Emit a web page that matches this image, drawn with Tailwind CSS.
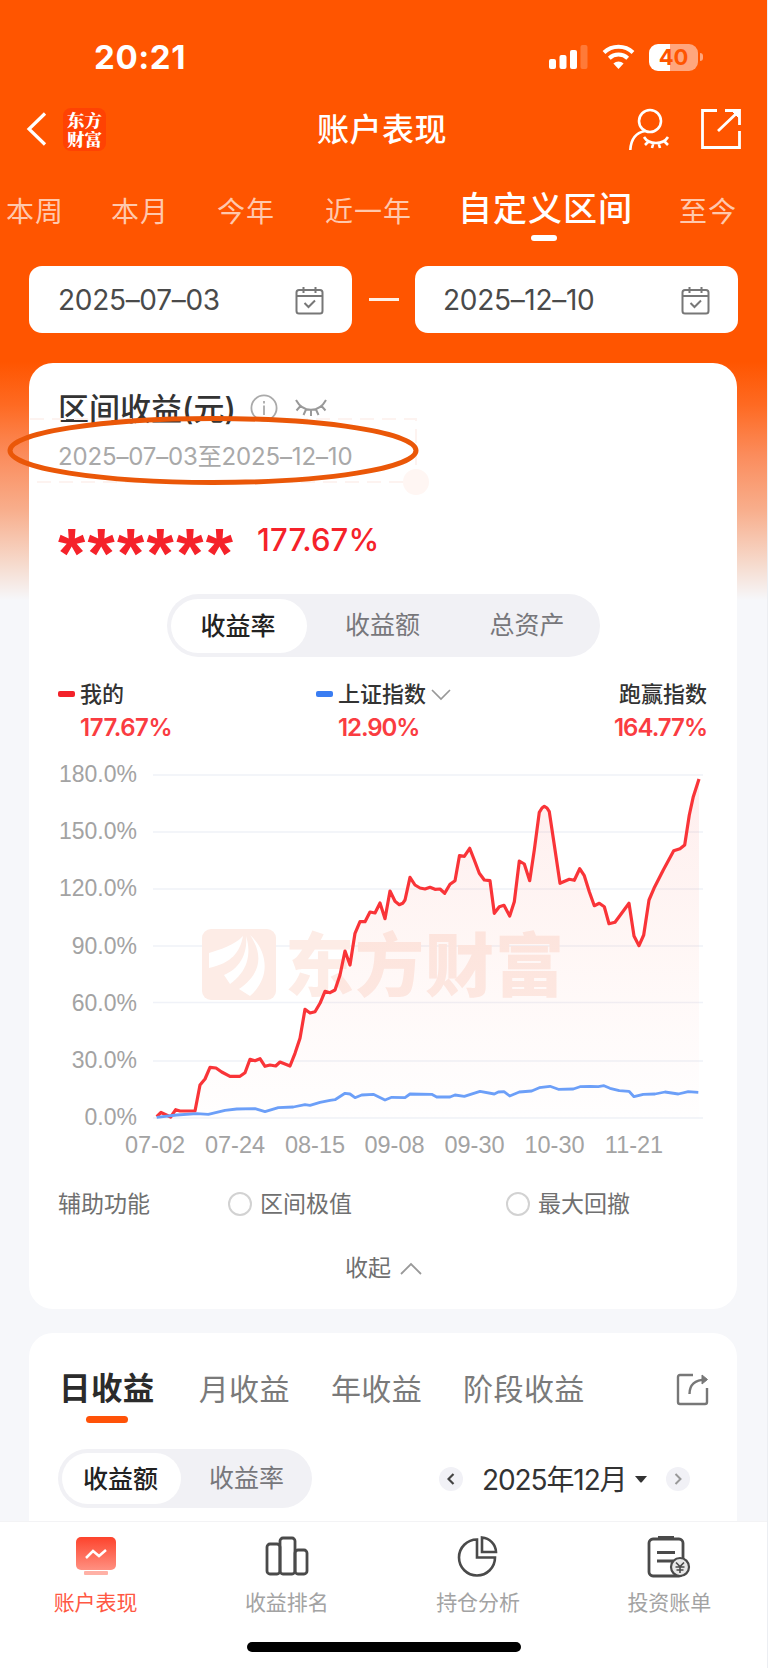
<!DOCTYPE html>
<html lang="zh-CN">
<head>
    <meta charset="UTF-8">
    <meta name="viewport" content="width=device-width, initial-scale=1.0">
    <title>账户表现</title>
    <script src="https://cdn.jsdelivr.net/npm/@tailwindcss/browser@4"></script>
</head>
<body class="bg-[#f6f7fa] font-['Inter','Noto_Sans_CJK_SC',sans-serif] text-[#333]">
    <div class="relative flex flex-col w-[768px] h-[1668px] overflow-hidden border-r border-[#eceef2] bg-[linear-gradient(180deg,#ff5500_0px,#ff5500_362px,#fe6a22_405px,#fb8c5c_455px,#f8ae8c_510px,#f6dbce_565px,#f6f7fa_600px)]">

        <!-- Status bar -->
        <div class="flex items-center h-[88px] pt-[26px] pl-[94px] pr-[64px] text-white">
            <span class="text-[33px] font-bold leading-none tracking-[0.600px]">20:21</span>
            <svg class="ml-auto" width="39" height="26" viewBox="0 0 39 26" fill="#fff">
                <rect x="0" y="15" width="7" height="10" rx="2"/>
                <rect x="10.500" y="11" width="7" height="14" rx="2"/>
                <rect x="21" y="6" width="7" height="19" rx="2"/>
                <rect x="31.500" y="1" width="7" height="24" rx="2" opacity=".22"/>
            </svg>
            <svg class="ml-[14px]" width="33" height="26" viewBox="0 0 33 26" fill="none" stroke="#fff" stroke-width="4">
                <path d="M2 8.500C10 .8 23 .8 31 8.500"/>
                <path d="M7.300 14.200C12.500 9.300 20.500 9.300 25.700 14.200"/>
                <path d="M16.500 25L11.400 19.600C14.300 16.900 18.700 16.900 21.600 19.600Z" fill="#fff" stroke="none"/>
            </svg>
            <div class="flex items-center ml-[14px]">
                <div class="w-[49px] h-[27px] rounded-[9px] bg-[linear-gradient(90deg,#fff_42%,#ffa67d_42%)] text-[#ff5500] text-[22px] font-bold leading-[27px] text-center">40</div>
                <div class="w-[3px] h-[8px] ml-[2px] rounded-r-full bg-[#ffa67d]"></div>
            </div>
        </div>

        <!-- Title bar -->
        <div class="flex items-center h-[82px] pl-[26px] pr-[25px] text-white">
            <svg width="21" height="34" viewBox="0 0 21 34" fill="none" stroke="#fff" stroke-width="3.200"><path d="M19 1.500L3 17L19 32.500"/></svg>
            <div class="flex flex-col items-center justify-center w-[43px] h-[43px] ml-[16px] rounded-lg bg-[#ff4203] font-['Noto_Serif_CJK_SC','Noto_Sans_CJK_SC',serif] font-black text-[17.500px] leading-[19.500px]"><span>东方</span><span>财富</span></div>
            <h1 class="ml-[211px] pt-[2px] text-[32px] font-medium tracking-[0.500px] leading-none">账户表现</h1>
            <svg class="ml-auto" width="42" height="43" viewBox="0 0 42 43" fill="none" stroke="#fff" stroke-width="2.600">
                <circle cx="22" cy="13" r="11"/>
                <path d="M2.300 42C3 30 9 24.500 17 23"/>
                <path d="M16 29C21 37 35 37 40 29M17 37L21 33M24 40L25.500 35M32 40L30.500 35M40 37L36 33"/>
            </svg>
            <svg class="ml-[30px]" width="42" height="42" viewBox="0 0 42 42" fill="none" stroke="#fff" stroke-width="2.800">
                <path d="M17 2.500H2.500V39.500H39.500V23M18 23L39 3M25 2.500H39.500V17"/><path d="M32 3H39V10Z" fill="#fff" stroke-width="1"/>
            </svg>
        </div>

        <!-- Period tabs -->
        <div class="flex items-center h-[82px] pt-[2px] pl-[6px] text-[28px] leading-[40px] tracking-[1px] text-[#ffc8ad] whitespace-nowrap">
            <span>本周</span>
            <span class="ml-[47px]">本月</span>
            <span class="ml-[48px]">今年</span>
            <span class="ml-[50px]">近一年</span>
            <span class="relative -top-[3px] ml-[46px] text-[34px] font-medium text-white">自定义区间<i class="absolute left-[73px] top-[46px] w-[26px] h-[6px] rounded-full bg-white"></i></span>
            <span class="ml-[46px]">至今</span>
        </div>

        <!-- Date range -->
        <div class="flex items-center mt-[14px] pl-[29px] h-[67px] text-[28px] tracking-[-0.300px] text-[#4a4a4a]">
            <div class="flex items-center w-[323px] h-[67px] pt-px pl-[29px] pr-[28px] rounded-[13px] bg-white">
                <span>2025–07–03</span>
                <svg class="ml-auto" width="29" height="29" viewBox="0 0 29 29" fill="none" stroke="#777" stroke-width="2">
                    <rect x="1.500" y="4" width="26" height="23.500" rx="2.500"/><path d="M1.500 10H27.500M8.500 1V7M20.500 1V7M9.500 17L13.500 21L20 14.500"/>
                </svg>
            </div>
            <div class="w-[30px] h-[3px] mx-[16.500px] bg-[#fff0e6]"></div>
            <div class="flex items-center w-[323px] h-[67px] pt-px pl-[28px] pr-[28px] rounded-[13px] bg-white">
                <span>2025–12–10</span>
                <svg class="ml-auto" width="29" height="29" viewBox="0 0 29 29" fill="none" stroke="#777" stroke-width="2">
                    <rect x="1.500" y="4" width="26" height="23.500" rx="2.500"/><path d="M1.500 10H27.500M8.500 1V7M20.500 1V7M9.500 17L13.500 21L20 14.500"/>
                </svg>
            </div>
        </div>

        <!-- Profit card -->
        <div class="relative shrink-0 w-[708px] h-[946px] mt-[30px] ml-[29px] rounded-[24px] bg-white">
            <div class="flex items-center h-[40px] mt-[25px] pl-[29px]">
                <h2 class="pt-px text-[31px] font-medium leading-none whitespace-nowrap">区间收益(元)</h2>
                <svg class="ml-[14px]" width="28" height="28" viewBox="0 0 28 28" fill="none" stroke="#aaa" stroke-width="1.800"><circle cx="14" cy="14" r="12.600"/><path d="M14 11.500V21M14 7V9.500"/></svg>
                <svg class="ml-[16px]" width="34" height="22" viewBox="0 0 34 22" fill="none" stroke="#999" stroke-width="2"><path d="M2 3C9 16 25 16 32 3M6.500 9L2.500 13.500M12 12.500L9.500 18M17 13V19M22 12.500L24.500 18M27.500 9L31.500 13.500"/></svg>
            </div>
            <div class="h-[30px] mt-[14px] pl-[29px] text-[24px] leading-[30px] tracking-[-0.150px] text-[#a9a9a9]">2025–07–03至2025–12–10</div>
            <div class="flex items-center h-[40px] mt-[46px] pl-[29px] text-[#f5222a]">
                <span class="w-[199px] h-[40px] font-['Liberation_Sans'] text-[70px] font-bold leading-[72px] tracking-[2.300px]">******</span>
                <span class="pt-[2px] text-[31px] font-medium leading-none tracking-[0.100px]">177.67%</span>
            </div>

            <div class="flex items-center w-[433px] h-[63px] mt-[36px] ml-[138px] px-[4px] rounded-full bg-[#f1f1f5] text-[25px] text-center text-[#77777b]">
                <span class="w-[136px] h-[54px] pr-[2px] rounded-full bg-white font-medium leading-[54px] text-[#222]">收益率</span>
                <span class="w-[151px]">收益额</span>
                <span class="flex-1">总资产</span>
            </div>

            <div class="flex mt-[20px] pl-[29px] pr-[30px] text-[22px] font-medium leading-[34px]">
                <div class="flex w-[258px]">
                    <i class="w-[17px] h-[6px] mt-[14px] mr-[5px] rounded-[2px] bg-[#f3222a]"></i>
                    <div>我的<div class="text-[24px] font-semibold leading-[34px] tracking-[-0.500px] text-[#fa3c41]">177.67%</div></div>
                </div>
                <div class="flex">
                    <i class="w-[17px] h-[6px] mt-[14px] mr-[5px] rounded-[2px] bg-[#3a7df2]"></i>
                    <div>
                        <span class="flex items-center">上证指数<svg class="ml-[5px]" width="20" height="13" viewBox="0 0 20 13" fill="none" stroke="#999" stroke-width="1.700"><path d="M1 2L10 11L19 2"/></svg></span>
                        <div class="text-[24px] font-semibold leading-[34px] tracking-[-1.100px] text-[#fa3c41]">12.90%</div>
                    </div>
                </div>
                <div class="ml-auto text-right">跑赢指数<div class="text-[24px] font-semibold leading-[34px] tracking-[-1px] text-[#fa3c41]">164.77%</div></div>
            </div>

            <!-- Return chart -->
            <svg class="absolute left-[29px] top-[392px]" width="652" height="405" viewBox="58 755 652 405">
                <defs>
                    <linearGradient id="area" x1="0" y1="775" x2="0" y2="1118" gradientUnits="userSpaceOnUse">
                        <stop offset="0" stop-color="#fa3c3c" stop-opacity=".09"/>
                        <stop offset=".5" stop-color="#fa5a3c" stop-opacity=".05"/>
                        <stop offset="1" stop-color="#fa5a5a" stop-opacity="0.005"/>
                    </linearGradient>
                </defs>
                <g stroke="#f0f2f8" stroke-width="1.500">
                    <path d="M153 775H703M153 832H703M153 889H703M153 946H703M153 1002.500H703M153 1061H703M153 1118H703"/>
                </g>
                <g fill="#fdece6">
                    <rect x="202" y="929" width="74" height="71" rx="9"/>
                    <text x="285" y="991" font-family="Noto Sans CJK SC" font-weight="900" font-size="69" letter-spacing="1">东方财富</text>
                </g>
                <g fill="#fff">
                    <path d="M209 953C219 950 235 945 243 936C240 952 232 963 209 968Z"/>
                    <path d="M246 936C248 954 239 969 224 975L230 984C247 972 252 955 246 936Z"/>
                    <path d="M250 935C265 957 259 975 239 989L250 996C272 977 267 950 250 935Z"/>
                </g>
                <path id="mineArea" fill="url(#area)"/>
                <polyline id="mine" fill="none" stroke="#f93438" stroke-width="3.200" stroke-linejoin="round"/>
                <polyline id="index" fill="none" stroke="#6c9ff8" stroke-width="2.800" stroke-linejoin="round"/>
                <g font-family="Liberation Sans" font-size="23" fill="#a3a3a3" text-anchor="end">
                    <text x="137" y="782">180.0%</text>
                    <text x="137" y="839">150.0%</text>
                    <text x="137" y="896">120.0%</text>
                    <text x="137" y="954">90.0%</text>
                    <text x="137" y="1011">60.0%</text>
                    <text x="137" y="1068">30.0%</text>
                    <text x="137" y="1125">0.0%</text>
                </g>
                <g font-family="Liberation Sans" font-size="23.500" fill="#a3a3a3" text-anchor="middle">
                    <text x="155" y="1153">07-02</text>
                    <text x="235" y="1153">07-24</text>
                    <text x="315" y="1153">08-15</text>
                    <text x="394.500" y="1153">09-08</text>
                    <text x="474.500" y="1153">09-30</text>
                    <text x="554.500" y="1153">10-30</text>
                    <text x="634" y="1153">11-21</text>
                </g>
            </svg>

            <div class="flex items-center h-[34px] mt-[442px] pl-[29px] text-[23px] text-[#707070]">
                <span class="w-[170px]">辅助功能</span>
                <i class="w-[24px] h-[24px] mr-[8px] rounded-full border-2 border-[#d2d2d2]"></i>
                <span class="w-[246px]">区间极值</span>
                <i class="w-[24px] h-[24px] mr-[8px] rounded-full border-2 border-[#d2d2d2]"></i>
                <span>最大回撤</span>
            </div>
            <div class="flex items-center h-[34px] mt-[30px] pl-[316px] text-[23px] text-[#707070]">
                收起<svg class="ml-[9px]" width="22" height="13" viewBox="0 0 22 13" fill="none" stroke="#999" stroke-width="1.800"><path d="M1 12L11 2L21 12"/></svg>
            </div>

            <!-- Marker drawn over the date line -->
            <svg class="absolute -left-[29px] top-[37px]" width="440" height="100" viewBox="0 400 440 100" fill="none">
                <path d="M30 419H416V482H30" stroke="#fdf3f0" stroke-width="2" stroke-dasharray="14 8"/>
                <circle cx="416" cy="482" r="13" fill="#fff6f3"/>
                <ellipse cx="213" cy="450.500" rx="203" ry="32" stroke="#ea5708" stroke-width="5"/>
            </svg>
        </div>

        <!-- Calendar card -->
        <div class="shrink-0 w-[708px] h-[188px] mt-[24px] ml-[29px] rounded-t-[24px] bg-white">
            <div class="flex items-center h-[44px] mt-[34px] pl-[30px] pr-[28px] text-[30px] tracking-[0.400px] text-[#7a7a7a] whitespace-nowrap">
                <span class="relative text-[31.500px] font-bold text-[#2b2b2b]">日收益<i class="absolute left-[27px] bottom-[-10px] w-[42px] h-[7px] rounded-full bg-[#ff5208]"></i></span>
                <span class="ml-[44px]">月收益</span>
                <span class="ml-[41px]">年收益</span>
                <span class="ml-[41px]">阶段收益</span>
                <svg class="ml-auto" width="33" height="33" viewBox="0 0 33 33" fill="none" stroke="#777" stroke-width="2.400">
                    <path d="M17 2H4Q2 2 2 4V29Q2 31 4 31H29Q31 31 31 29V15"/><path d="M13.500 21C13.500 12 18 7 30 6.500"/><path d="M26 2L31.500 6.500L26 11Z" fill="#777" stroke-width="1"/>
                </svg>
            </div>
            <div class="flex items-center mt-[38px] pl-[29px]">
                <div class="flex items-center w-[254px] h-[59px] px-[4px] rounded-full bg-[#f1f1f5] text-[25px] text-center text-[#77777b]">
                    <span class="w-[119px] h-[51px] pr-[2px] rounded-full bg-white font-medium leading-[52px] text-[#222]">收益额</span>
                    <span class="flex-1 pl-[4px]">收益率</span>
                </div>
                <div class="flex items-center ml-[127px]">
                    <div class="flex items-center justify-center w-[24px] h-[24px] rounded-full bg-[#f1f1f6]"><svg width="8" height="12" viewBox="0 0 8 12" fill="none" stroke="#444" stroke-width="2.200"><path d="M6.500 1L1.500 6L6.500 11"/></svg></div>
                    <span class="pt-[2px] ml-[19px] text-[28px] leading-none tracking-[-1.100px] text-[#333] whitespace-nowrap">2025年12月</span>
                    <svg class="ml-[8px]" width="12" height="8" viewBox="0 0 12 8" fill="#333"><path d="M0 1H12L7 7Q6 8 5 7Z"/></svg>
                    <div class="flex items-center justify-center w-[24px] h-[24px] ml-[19px] rounded-full bg-[#f1f1f6]"><svg width="8" height="12" viewBox="0 0 8 12" fill="none" stroke="#999" stroke-width="2"><path d="M1.500 1L6.500 6L1.500 11"/></svg></div>
                </div>
            </div>
        </div>

        <!-- Bottom navigation -->
        <div class="relative shrink-0 h-[147px] border-t border-[#f3f3f5] bg-white">
            <div class="grid grid-cols-4 w-[767px] pt-[14px] pr-[2px] text-[21px] leading-[30px] text-center text-[#a3a3a3]">
                <div class="flex flex-col items-center text-[#ff5843]">
                    <svg width="44" height="44" viewBox="0 0 44 44">
                        <defs><linearGradient id="tv" x1="0" y1="0" x2="0" y2="1"><stop offset="0" stop-color="#fd432c"/><stop offset="1" stop-color="#ff9081"/></linearGradient></defs>
                        <rect x="2" y="1" width="40" height="33" rx="5" fill="url(#tv)"/><rect x="10" y="35" width="24" height="4" rx="1" fill="#ffb1a6"/>
                        <path d="M12 22L19 15L25 20L32 14" fill="none" stroke="#fff" stroke-width="2.500"/>
                    </svg>
                    <span class="mt-[8px]">账户表现</span>
                </div>
                <div class="flex flex-col items-center">
                    <svg width="44" height="44" viewBox="0 0 44 44" fill="none" stroke="#4a4a4a" stroke-width="2.800"><rect x="2" y="8" width="13" height="30" rx="3"/><rect x="15" y="2" width="15" height="36" rx="3"/><rect x="30" y="14" width="12" height="24" rx="3"/></svg>
                    <span class="mt-[8px]">收益排名</span>
                </div>
                <div class="flex flex-col items-center">
                    <svg width="44" height="44" viewBox="0 0 44 44" fill="none" stroke="#4a4a4a" stroke-width="2.600"><path d="M21 3.500A18 18 0 1 0 39 21.500H21Z"/><path d="M26 1.500V16H40A15 15 0 0 0 26 1.500Z"/></svg>
                    <span class="mt-[8px]">持仓分析</span>
                </div>
                <div class="flex flex-col items-center">
                    <svg width="44" height="44" viewBox="0 0 44 44" fill="none" stroke="#4a4a4a" stroke-width="2.800"><rect x="2" y="3" width="34" height="37" rx="4"/><path d="M11 2H27" stroke-width="4"/><path d="M10 16.500H28M10 25H26"/><circle cx="33" cy="31" r="9" fill="#e8e8e8" stroke-width="2.200"/><path d="M29 26.500L33 30.500L37 26.500M28.500 31H37.500M29.500 34H36.500M33 30.500V37" stroke-width="1.600"/></svg>
                    <span class="mt-[8px]">投资账单</span>
                </div>
            </div>
            <div class="w-[274px] h-[10px] mt-[24px] ml-[247px] rounded-full bg-black"></div>
        </div>
    </div>

    <script>
        const mine = [
            [156.7,1116.7],[161,1112.5],[170.7,1117],[175.7,1109.7],[180,1111],[195,1111],[200,1085],[205,1079],[210,1067.3],[216,1068],
            [221.7,1072],[230,1076.3],[240,1076.3],[245,1072.7],[250,1059.3],[255,1060.7],[260,1058.7],[265,1066.3],[270,1065],[275.7,1066],
            [280,1062],[290,1066],[295,1053.3],[300,1038.3],[305,1009.3],[310,1013],[315,1011.7],[320,1003.3],[325,991.3],[330,992.7],
            [335,990],[340,975],[345,951],[350,965],[355,933.3],[360,921.7],[365,921.7],[370,912],[375,913],[380,903],[385,918.7],
            [390,891],[395,901.3],[399.3,904.7],[402.7,903.3],[405,900],[410,877.3],[415,885],[420,888],[425,889],[430,887.3],[435,889.3],
            [440,889],[444.7,893.3],[450,884.3],[455,880.7],[459.5,855.5],[464.3,856.3],[469.7,848.3],[474.3,860],[479.3,873.3],[484.3,880],
            [490,880.7],[494.3,913.3],[499.3,906.7],[504,905.3],[509.7,916],[514.3,901.7],[519.3,861],[524.3,864],[529.7,880.7],[534.3,850],
            [539.3,812.3],[542,808],[544.3,806.3],[547,808],[549.3,811.7],[554.3,845],[560,883.3],[569.3,879.3],[574.3,880.3],[579.7,868.7],[584.3,875.7],
            [589.3,891.7],[594.3,905.7],[599.3,903.3],[604.3,906.7],[609,923.7],[615,922.3],[629,903.3],[634,936],[639,945.7],[643.7,935],
            [649,900],[654,888.3],[663.3,870],[673.7,850.7],[680,848.7],[684.7,845],[689.3,815],[693.3,796.7],[699,779]
        ];
        const index = [
            [156.7,1117.3],[176.7,1115],[196.7,1113.7],[208.3,1114.3],[225,1110.3],[236.7,1109],[255,1108.7],[265,1111.7],[278.3,1107.7],
            [293.3,1107],[305,1104.7],[310,1105.3],[320,1102.3],[330,1100.3],[335,1099.7],[345,1093.3],[350,1094],[355,1097.7],[361.7,1095],
            [373.3,1094.3],[385,1100],[391.7,1097.3],[405,1097.7],[410,1094],[431.7,1094.3],[436.7,1097],[450,1097],[455,1095],[464.3,1096.3],
            [480,1091.3],[494.3,1094],[498.3,1092],[504,1091.7],[509.7,1096],[519.3,1092],[531.7,1091],[539.3,1087.7],[550,1086.3],
            [558.3,1089.3],[573.3,1089],[580,1086.7],[590,1086.3],[598.3,1086.7],[604,1085.7],[610,1088.3],[619.3,1090.7],[629,1091.3],
            [634,1096.7],[643.3,1094.3],[655,1094],[665,1092],[678.3,1094],[688.3,1091.7],[698.3,1092.3]
        ];

        document.getElementById('mine').setAttribute('points', mine.join(' '));
        document.getElementById('index').setAttribute('points', index.join(' '));
        document.getElementById('mineArea').setAttribute('d', `M${mine.join('L')}V1118H156.7Z`);
    </script>
</body>
</html>
